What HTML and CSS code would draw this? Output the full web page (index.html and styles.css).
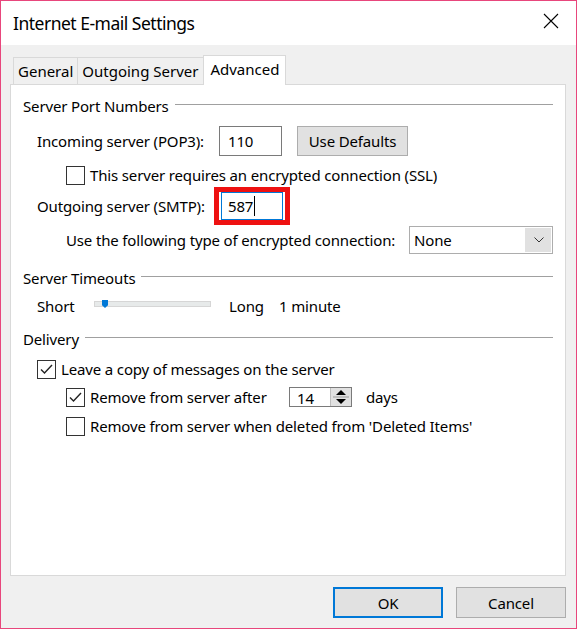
FILE: index.html
```html
<!DOCTYPE html>
<html>
<head>
<meta charset="utf-8">
<link rel="stylesheet" href="styles.css">
</head>
<body>
<div class="window">
  <div class="titlebar">
    <span class="title">Internet E-mail Settings</span>
    <svg class="close" width="16" height="16" viewBox="0 0 16 16"><path d="M1 1L15 15M15 1L1 15" stroke="#000" stroke-width="1.1" fill="none"/></svg>
  </div>
  <div class="body">
    <div class="tabs">
      <div class="tab">General</div>
      <div class="tab tab-out">Outgoing Server</div>
      <div class="tab active">Advanced</div>
    </div>
    <div class="panel">
      <div class="group-head h1"><span>Server Port Numbers</span><div class="rule"></div></div>

      <div class="row r-incoming indent1">
        <span class="label lbl-port">Incoming server (POP3):</span>
        <div class="textbox port">110</div>
        <div class="btn defaults">Use Defaults</div>
      </div>

      <div class="row r-ssl indent2">
        <span class="check"></span>
        <span class="ctext">This server requires an encrypted connection (SSL)</span>
      </div>

      <div class="row r-outgoing indent1">
        <span class="label lbl-port">Outgoing server (SMTP):</span>
        <div class="highlight"><div class="textbox port focused">587<span class="caret"></span></div></div>
      </div>

      <div class="row r-enc indent2">
        <span class="label lbl-enc">Use the following type of encrypted connection:</span>
        <div class="select">
          <span class="sel-text">None</span>
          <span class="sel-btn"><svg width="10" height="6" viewBox="0 0 10 6"><path d="M0.5 0.5L5 5L9.5 0.5" stroke="#333" stroke-width="1" fill="none"/></svg></span>
        </div>
      </div>

      <div class="group-head h2"><span>Server Timeouts</span><div class="rule"></div></div>

      <div class="row r-short indent1">
        <span class="label lbl-short">Short</span>
        <div class="slider"><span class="track"></span><span class="thumb"></span></div>
        <span class="label lbl-long">Long</span>
        <span class="label">1 minute</span>
      </div>

      <div class="group-head h3"><span>Delivery</span><div class="rule"></div></div>

      <div class="row r-leave indent1">
        <span class="check checked"><svg width="17" height="17" viewBox="0 0 17 17"><path d="M3 8.5L6.5 12L14 4" stroke="#222" stroke-width="1.4" fill="none"/></svg></span>
        <span class="ctext">Leave a copy of messages on the server</span>
      </div>

      <div class="row r-after indent2">
        <span class="check checked"><svg width="17" height="17" viewBox="0 0 17 17"><path d="M3 8.5L6.5 12L14 4" stroke="#222" stroke-width="1.4" fill="none"/></svg></span>
        <span class="ctext lbl-after">Remove from server after</span>
        <div class="spinner">
          <span class="spin-text">14</span>
          <span class="spin-btns">
            <svg width="20" height="18" viewBox="0 0 20 18"><path d="M5 7L10 2L15 7Z" fill="#000"/><path d="M2 9H18" stroke="#999" stroke-width="1"/><path d="M5 11L15 11L10 16Z" fill="#000"/></svg>
          </span>
        </div>
        <span class="ctext days">days</span>
      </div>

      <div class="row r-deleted indent2">
        <span class="check"></span>
        <span class="ctext">Remove from server when deleted from 'Deleted Items'</span>
      </div>
    </div>
    <div class="footer">
      <div class="btn dlg ok">OK</div>
      <div class="btn dlg">Cancel</div>
    </div>
  </div>
</div>
</body>
</html>
```

FILE: styles.css
```css
* { box-sizing: border-box; }
html, body { margin: 0; padding: 0; }
body {
  font-family: "Noto Sans", "Open Sans", sans-serif;
  font-size: 15px;
  letter-spacing: -0.15px;
  color: #000;
  background: #fff;
}
.window {
  width: 577px;
  height: 629px;
  border: 1px solid #e8467c;
  background: #f0f0f0;
  display: flex;
  flex-direction: column;
}
.titlebar {
  height: 44px;
  background: #fff;
  display: flex;
  align-items: center;
  justify-content: space-between;
  padding: 0 17px 0 12px;
}
.title {
  font-size: 17.5px;
  letter-spacing: -0.5px;
  margin-top: 0;
}
.close { margin-top: -4px; }
.body {
  padding: 10px 10px 0 9px;
  display: flex;
  flex-direction: column;
}
.tabs {
  display: flex;
  align-items: flex-end;
  padding-left: 3px;
  height: 29px;
  letter-spacing: 0;
}
.tab {
  height: 27px;
  border: 1px solid #d9d9d9;
  border-bottom: none;
  border-right: none;
  background: #f0f0f0;
  padding: 0 4px;
  display: flex;
  align-items: center;
  line-height: 1;
}
.tab-out { padding: 0 5px 0 4px; }
.tab.active {
  height: 30px;
  background: #fff;
  border-right: 1px solid #d9d9d9;
  margin-bottom: -1px;
  position: relative;
  z-index: 1;
  padding: 0 6px 3px 6px;
}
.panel {
  width: 556px;
  height: 492px;
  background: #fff;
  border: 1px solid #d9d9d9;
  padding: 11px 12px 0 12px;
  display: flex;
  flex-direction: column;
}
.group-head {
  height: 20px;
  display: flex;
  align-items: center;
  white-space: nowrap;
}
.group-head .rule {
  flex: 1;
  height: 0;
  border-top: 1px solid #a0a0a0;
  border-bottom: 1px solid #fff;
  margin-left: 6px;
  margin-top: -3px;
}
.row {
  display: flex;
  align-items: center;
  white-space: nowrap;
}
.indent1 { padding-left: 14px; }
.indent2 { padding-left: 43px; }
.r-incoming { margin-top: 10px; height: 30px; }
.r-ssl { margin-top: 9px; height: 20px; }
.r-outgoing { margin-top: 2px; height: 38px; }
.r-enc { height: 28px; margin-top: 1px; }
.h2 { margin-top: 14px; }
.r-short { margin-top: 8px; height: 20px; }
.h3 { margin-top: 13px; }
.r-leave { margin-top: 10px; height: 20px; }
.r-after { margin-top: 8px; height: 20px; }
.r-deleted { margin-top: 9px; height: 20px; }

.lbl-port { width: 182px; }
.lbl-enc { width: 343px; }
.textbox {
  border: 1px solid #7a7a7a;
  background: #fff;
  display: flex;
  align-items: center;
}
.port { width: 63px; height: 30px; padding-left: 8px; }
.highlight {
  margin-left: -5px;
  border: 5px solid #ee1111;
  padding: 0 2px;
  display: flex;
}
.focused {
  width: 62px;
  height: 28px;
  border-color: #0078d7;
  padding-left: 6px;
}
.caret {
  display: inline-block;
  width: 1px;
  height: 20px;
  background: #000;
  margin-left: 1px;
}
.btn {
  background: #e1e1e1;
  border: 1px solid #adadad;
  display: flex;
  align-items: center;
  justify-content: center;
}
.defaults { width: 111px; height: 30px; margin-left: 15px; }
.check {
  width: 19px;
  height: 19px;
  border: 1px solid #333;
  background: #fff;
  display: flex;
  align-items: center;
  justify-content: center;
  margin-right: 5px;
  flex: none;
}
.select {
  width: 144px;
  height: 28px;
  border: 1px solid #adadad;
  display: flex;
  align-items: stretch;
}
.sel-text { flex: 1; padding-left: 4px; display: flex; align-items: center; }
.sel-btn {
  width: 26px;
  background: #e1e1e1;
  border-left: 1px solid #e1e1e1;
  margin: 1px;
  display: flex;
  align-items: center;
  justify-content: center;
}
.lbl-short { width: 57px; }
.slider { position: relative; width: 117px; height: 12px; margin-right: 18px; }
.track {
  position: absolute;
  left: 0; top: 1px;
  width: 117px; height: 6px;
  background: #e7eaea;
  border: 1px solid #d6d6d6;
}
.thumb {
  position: absolute;
  left: 8px; top: 0;
  width: 6px; height: 8px;
  background: #0078d7;
  clip-path: polygon(0 0, 100% 0, 100% 65%, 50% 100%, 0 65%);
}
.lbl-long { width: 50px; }
.lbl-after { width: 199px; }
.spinner {
  width: 63px;
  height: 20px;
  border: 1px solid #7a7a7a;
  display: flex;
  align-items: stretch;
}
.spin-text { flex: 1; padding-left: 7px; padding-top: 3px; display: flex; align-items: center; line-height: 1; }
.spin-btns {
  width: 21px;
  background: #e1e1e1;
  border-left: 1px solid #bdbdbd;
  display: flex;
  align-items: center;
  justify-content: center;
}
.days { margin-left: 14px; }
.footer {
  display: flex;
  justify-content: flex-end;
  gap: 13px;
  margin-top: 11px;
}
.dlg { width: 110px; height: 31px; }
.ok { border: 2px solid #0078d7; }
```
